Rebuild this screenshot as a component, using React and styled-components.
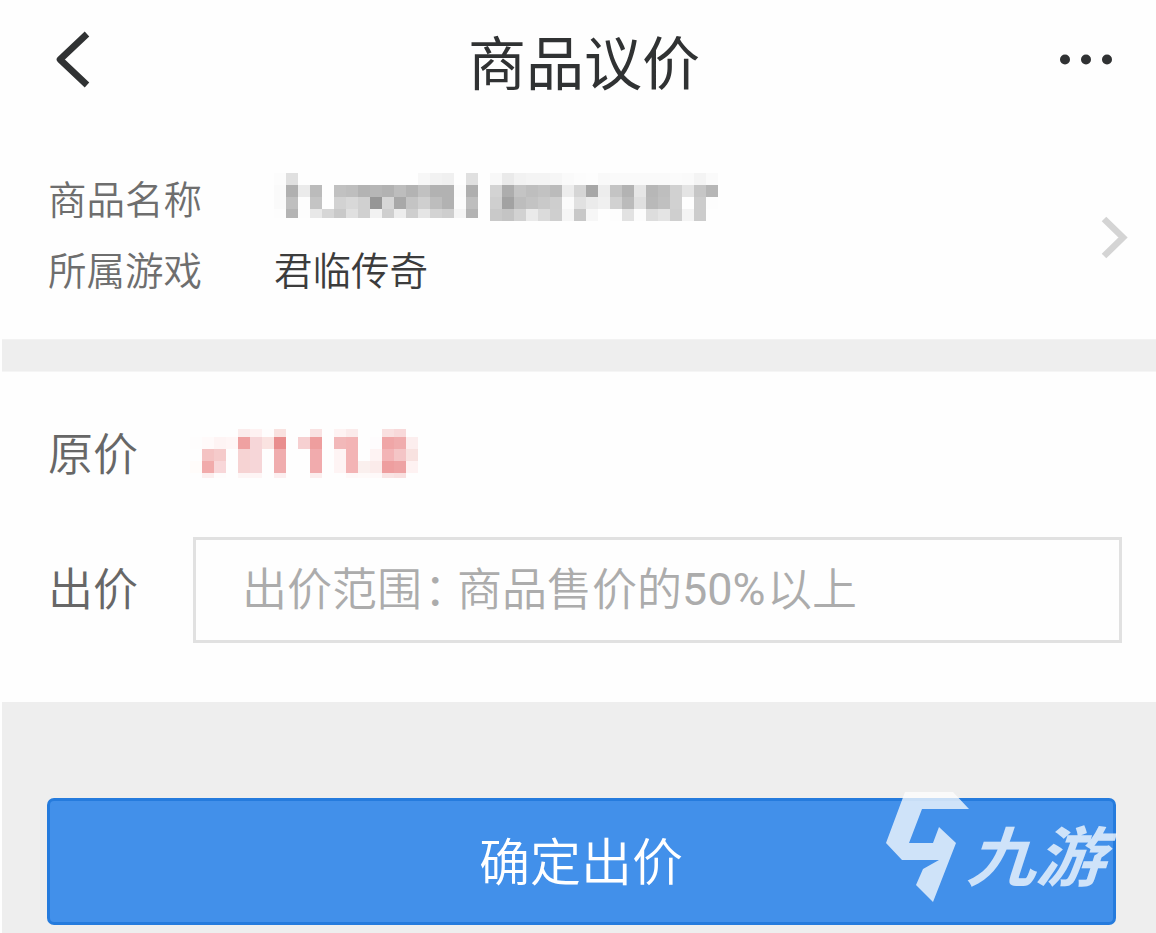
import React from "react";
import styled, { createGlobalStyle } from "styled-components";

const GlobalStyle = createGlobalStyle`
  *, *::before, *::after { box-sizing: border-box; }
  html, body { margin: 0; background: #fefefe; overflow: hidden; }
  body { font-family: "Noto Sans CJK SC", sans-serif; font-weight: 350; }
`;

const Page = styled.main`
  width: 1156px;
  height: 933px;
  padding-left: 2px;
  display: flex;
  flex-direction: column;
  overflow: hidden;
  background: #fefefe;
`;

const Header = styled.header`
  height: 124px;
  flex: none;
  display: grid;
  grid-template-columns: 130px 1fr 120px;
  align-items: center;
  padding: 0 0 4px;
`;

const Title = styled.h1`
  margin: 0;
  text-align: center;
  font-size: 58px;
  line-height: 70px;
  font-weight: 400;
  color: #303233;
  white-space: nowrap;
`;

const IconButton = styled.button`
  display: flex;
  justify-content: ${(p) => (p.$end ? "flex-end" : "flex-start")};
  padding: 0 ${(p) => (p.$end ? "44px" : "0")} 0 ${(p) => (p.$end ? "0" : "51px")};
  border: 0;
  background: none;
  color: #303233;
`;

const Icon = styled.svg`
  display: block;
  flex: none;
`;

const Product = styled.section`
  height: 215px;
  flex: none;
  display: flex;
  justify-content: space-between;
  padding: 39px 27px 0 46px;
`;

const Details = styled.dl`
  margin: 0;
  display: grid;
  grid-template-columns: 226px auto;
  grid-template-rows: 71px 71px;
`;

const Term = styled.dt`
  font-size: 38.5px;
  line-height: 68px;
  color: #6e6e6e;
  white-space: nowrap;
`;

const Value = styled.dd`
  margin: 0;
  font-size: 38.5px;
  line-height: 68px;
  color: #3c3c3c;
  white-space: nowrap;
`;

const Arrow = styled.div`
  margin-top: 53px;
  height: 44px;
`;

const Divider = styled.div`
  height: 33px;
  flex: none;
  background: #eeeeee;
  border-top: 1px solid #f2f2f2;
  border-bottom: 1px solid #f5f5f5;
`;

const Form = styled.section`
  height: 330px;
  flex: none;
  padding: 45px 34px 0 46px;
`;

const Field = styled.div`
  display: grid;
  grid-template-columns: 145px 1fr;
  align-items: start;
  height: ${(p) => p.$height}px;
`;

const FieldLabel = styled.label`
  font-size: 45px;
  line-height: 70px;
  padding-top: ${(p) => p.$top || 0}px;
  color: #676767;
  white-space: nowrap;
`;

const PriceInput = styled.div`
  height: 106px;
  border: 3px solid #e1e1e1;
  padding: 0 0 7px 46px;
  display: flex;
  align-items: center;
  font-size: 45px;
  line-height: 70px;
  color: #acacac;
  white-space: nowrap;
`;

const Colon = styled.span`
  width: 35px;
  padding-left: 2px;
  font-feature-settings: "halt" 1;
`;

const Digits = styled.span`
  width: 85px;
  padding-top: 7px;
  font-family: Roboto, sans-serif;
  font-size: 45px;
  font-weight: 400;
  letter-spacing: 0;
`;

const Mosaic = styled.div`
  display: grid;
  width: max-content;
  grid-template-columns: repeat(${(p) => p.$columns}, 12px);
  grid-template-rows: ${(p) => p.$rows};
  margin: ${(p) => p.$margin};
`;

const Cell = styled.span`
  background: ${(p) => p.$color};
  margin-bottom: ${(p) => (p.$trimmed ? "3px" : "0")};
`;

const Footer = styled.footer`
  flex: 1;
  background: #eeeeee;
  padding: 96px 40px 0 45px;
`;

const SubmitWrap = styled.div`
  position: relative;
  width: 1069px;
`;

const Submit = styled.button`
  display: block;
  width: 100%;
  height: 127px;
  padding: 0 0 5px;
  border: 3px solid #257bdd;
  border-radius: 7px;
  background: #4290ea;
  color: #ffffff;
  font: 350 51px/72px "Noto Sans CJK SC", sans-serif;
  text-indent: -1px;
`;

const Watermark = styled.div`
  position: absolute;
  left: 838px;
  top: -7px;
  width: 231px;
  height: 112px;
  opacity: 0.75;
  color: #ffffff;
  pointer-events: none;
`;

const BrandName = styled.span`
  position: absolute;
  left: 90px;
  top: 30px;
  font-size: 65px;
  line-height: 65px;
  font-weight: 700;
  transform: scaleX(1.06) skewX(-17deg);
  transform-origin: left center;
  white-space: nowrap;
`;

const nameCells = [
  "fc fa fa fd", "e0 b0 bf b4", "fe eb fd fd", "fe bb c4 e8", "fe fe fe d6",
  "fe c1 d2 c9", "fe be d8 e0", "fe b3 d0 d0", "fe b6 96 f2", "fe b2 d6 cf",
  "fe bd a8 ed", "fe b3 c4 ce", "f7 c1 cf e5", "f2 b2 bd d3", "f0 b2 b2 ce",
  "fe fb fc f5", "e0 af be b3", "fe fe fe fe", "f8 d3 cf c9", "ea ad a2 c4",
  "f2 c4 bd d2", "f4 be c3 ea", "f4 c2 c9 db", "f6 bb ce cf", "fa ed fb f6",
  "fc d5 e1 c8", "fd a7 eb f7", "f9 ed f0 fe", "fa c4 d1 fd", "fa b3 bb e2",
  "fa e6 e0 fc", "fa b7 b9 dd", "fa be c0 e4", "fb d1 d1 cf", "fa e4 fe f4",
  "f4 c6 cc cc", "fa b6 fd fe",
].map((column) => column.split(" ").map((v) => `#${v}${v}${v}`));

const priceCells = [
  "- fefdfd - fffcfa -",
  "- fffafa f4c3c3 f1abab fcefef",
  "- fef4f4 f5cbcb f8d7d9 fefcfc",
  "- fff6f6 - - -",
  "fbecec efa1a1 f6d3d3 f6d3d3 fdf5f5",
  "fef2f2 f6d6d8 f6d6d8 f6d6d8 fef5f5",
  "fefdfd fae3e1 - - -",
  "f9e2e0 e98e8e f0adae f0adae fceff0",
  "- - - - -",
  "- f6d0d1 - - -",
  "f9e2e2 ee9e9e f1abad f1abad fceeee",
  "- - - - -",
  "fef3f3 f2b8b9 fef4f4 fef4f4 -",
  "fbebeb f3b4b5 f3b4b5 f3b4b5 fef8f8",
  "- - - faf0ee fefaf9",
  "- fefcfd fef3f3 fbebea fef9f9",
  "f9e0e0 f0a6a7 f3b4b6 ee9e9f f9e4e4",
  "f8d9da f0acad f4c5c6 eea3a4 f9e0e0",
  "- fceeee f8e2e0 fef2f2 -",
].map((column) => column.split(" ").map((v) => (v === "-" ? "transparent" : `#${v}`)));

function Censored({ cells, rows, margin, trimmedColumns = 0 }) {
  const last = cells[0].length - 1;
  return (
    <Mosaic $columns={cells.length} $rows={rows} $margin={margin}>
      {cells[0].map((_, y) =>
        cells.map((column, x) => (
          <Cell key={`${x}-${y}`} $color={column[y]} $trimmed={y === last && x < trimmedColumns} />
        ))
      )}
    </Mosaic>
  );
}

export default function App() {
  return (
    <>
      <GlobalStyle />
      <Page>
        <Header>
          <IconButton aria-label="返回">
            <Icon width="40" height="60" viewBox="0 0 40 60" fill="none">
              <path d="M34 4 7 29.5 34 55" stroke="currentColor" strokeWidth="6.6" strokeLinejoin="round" />
            </Icon>
          </IconButton>
          <Title>商品议价</Title>
          <IconButton $end aria-label="更多">
            <Icon width="54" height="12" viewBox="0 0 54 12" fill="currentColor">
              <circle cx="7" cy="5.5" r="5" />
              <circle cx="28" cy="5.5" r="5" />
              <circle cx="49" cy="5.5" r="5" />
            </Icon>
          </IconButton>
        </Header>
        <Product>
          <Details>
            <Term>商品名称</Term>
            <Value>
              <Censored cells={nameCells} rows="repeat(4, 12px)" margin="10px 0 0" trimmedColumns={18} />
            </Value>
            <Term>所属游戏</Term>
            <Value>君临传奇</Value>
          </Details>
          <Arrow>
            <Icon width="28" height="44" viewBox="0 0 28 44" fill="none">
              <path d="M3 3 22 21.5 3 40" stroke="#d4d4d4" strokeWidth="6.5" />
            </Icon>
          </Arrow>
        </Product>
        <Divider />
        <Form>
          <Field $height={120}>
            <FieldLabel>原价</FieldLabel>
            <Censored cells={priceCells} rows="8px 12px 12px 12px 5px" margin="12px 0 0 -3px" />
          </Field>
          <Field $height={106}>
            <FieldLabel $top={15}>出价</FieldLabel>
            <PriceInput>
              <span>出价范围</span>
              <Colon>：</Colon>
              <span>商品售价的</span>
              <Digits>50%</Digits>
              <span>以上</span>
            </PriceInput>
          </Field>
        </Form>
        <Footer>
          <SubmitWrap>
            <Submit>确定出价</Submit>
            <Watermark>
              <Icon width="90" height="112" viewBox="0 0 90 112" fill="currentColor">
                <path d="M20 1H68L84 18H37L24 52H48L54 36L71 52L48 111L31 94L38 78L54 69H17L1 52Z" />
              </Icon>
              <BrandName>九游</BrandName>
            </Watermark>
          </SubmitWrap>
        </Footer>
      </Page>
    </>
  );
}
